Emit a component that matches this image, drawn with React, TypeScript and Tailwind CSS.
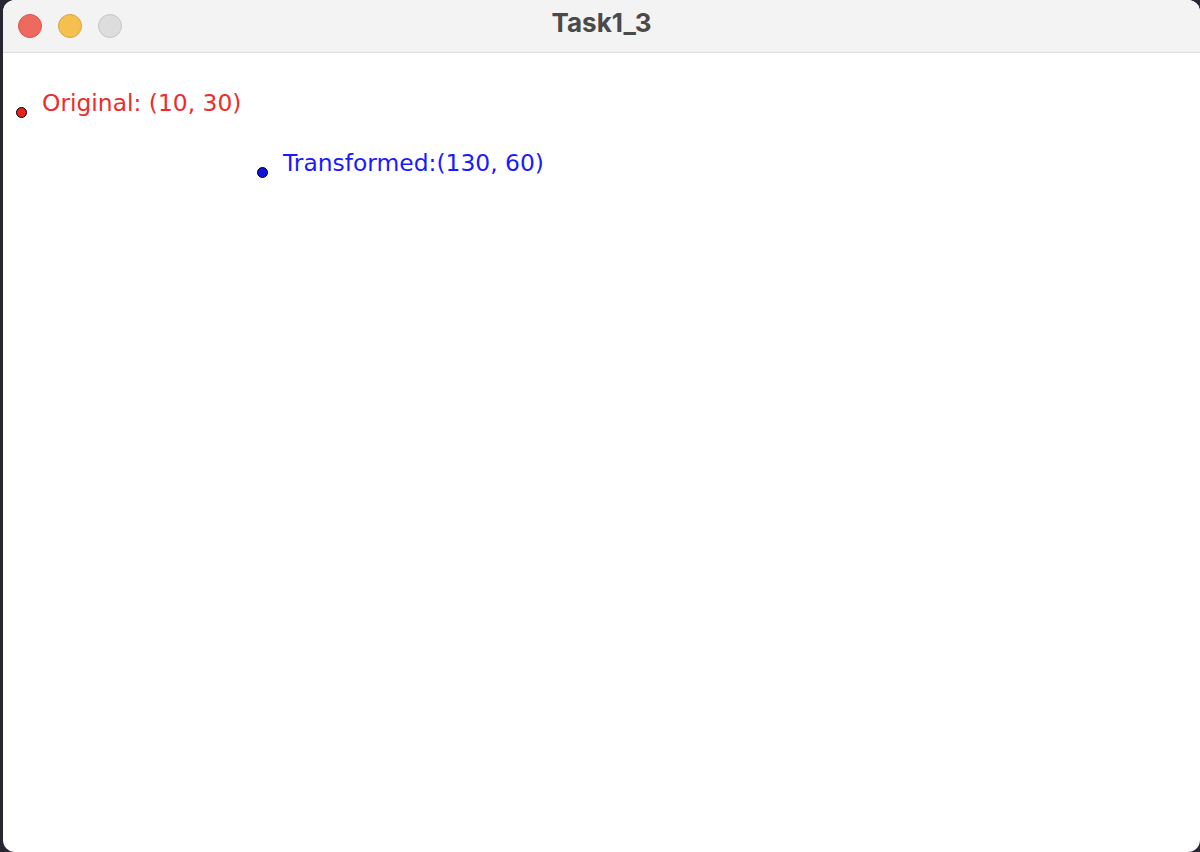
export default function App() {
  return (
    <div className="h-[852px] w-[1200px] overflow-hidden bg-[#2a2631] pl-[3px]">
      <div className="flex h-full flex-col overflow-hidden rounded-[12px] bg-white">
        <div className="relative flex h-[53px] shrink-0 items-center border-b border-[#d9d9d9] bg-[#f3f3f3]">
          <div className="flex items-center gap-[16px] pl-[15px]">
            <span className="h-[24px] w-[24px] rounded-full border border-[#d9574c] bg-[#ee6a5f]" />
            <span className="h-[24px] w-[24px] rounded-full border border-[#d9a440] bg-[#f6c050]" />
            <span className="h-[24px] w-[24px] rounded-full border border-[#c6c6c6] bg-[#dddddd]" />
          </div>
          <div className="absolute inset-x-0 top-0 flex h-[52px] items-center justify-center pb-[7px] font-['Inter',sans-serif] text-[26px] font-bold text-[#4a4a4a]">
            Task1_3
          </div>
        </div>
        <div className="relative flex-1 font-['DejaVu_Sans',sans-serif] text-[23.4px]">
          <span className="absolute left-[13px] top-[54px] h-[11px] w-[11px] rounded-full border-[1.5px] border-black bg-[#e8231e]" />
          <span className="absolute left-[39px] top-[39px] leading-none text-[#ee2c2c]">
            Original: (10, 30)
          </span>
          <span className="absolute left-[254px] top-[114px] h-[11px] w-[11px] rounded-full border-[1.5px] border-black bg-[#1010e0]" />
          <span className="absolute left-[280px] top-[99px] leading-none text-[#1a1aff]">
            Transformed:(130, 60)
          </span>
        </div>
      </div>
    </div>
  );
}
